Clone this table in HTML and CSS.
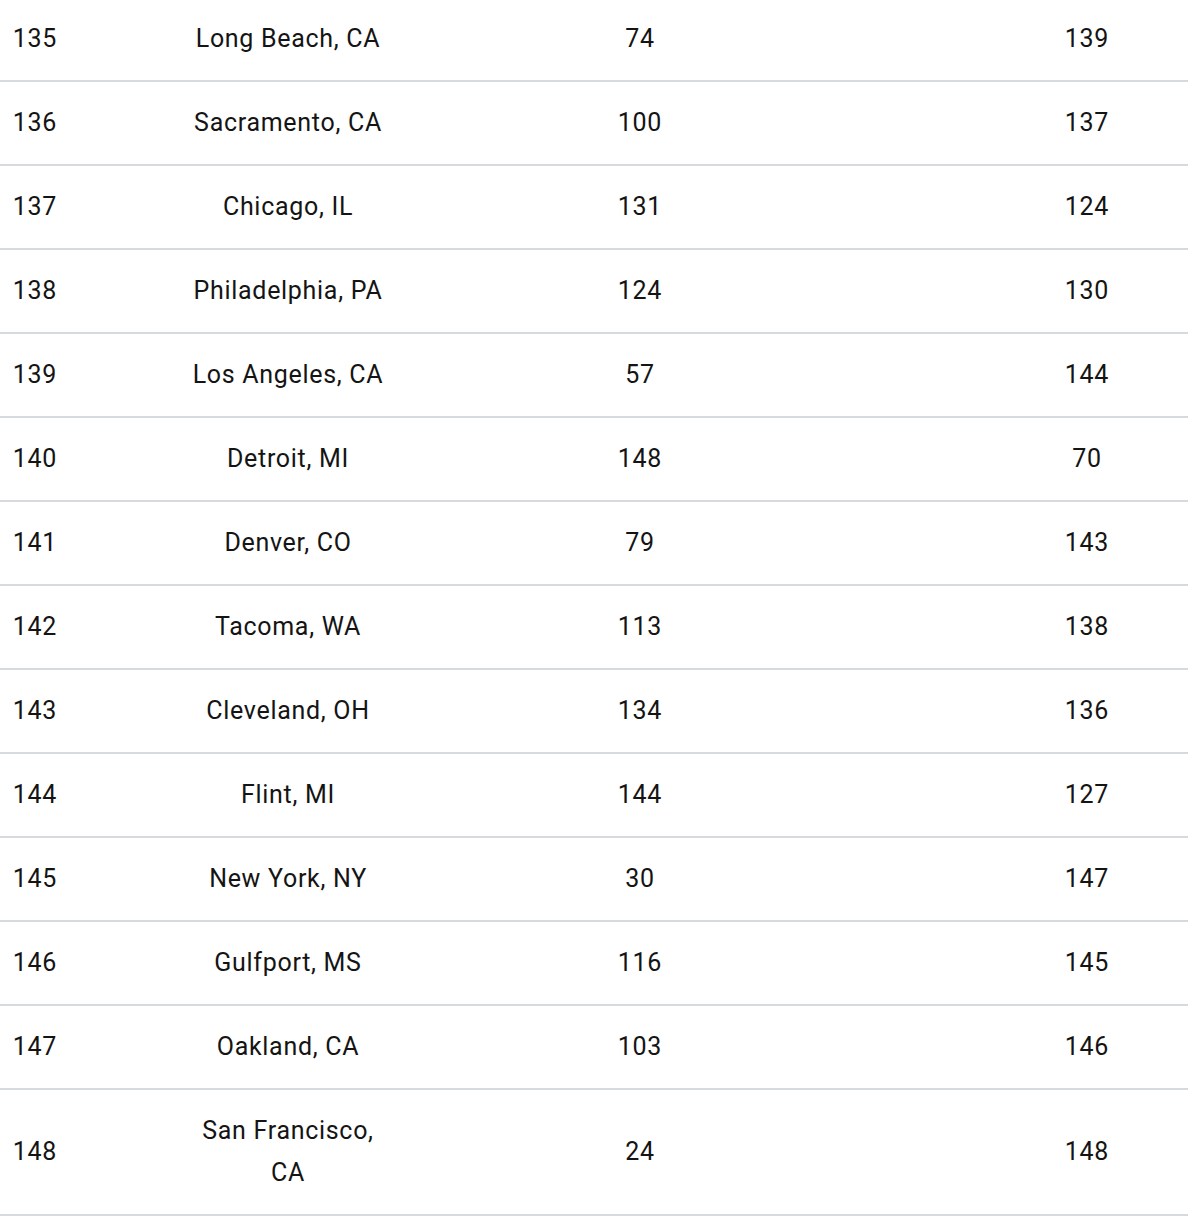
FILE: index.html
```html
<!DOCTYPE html>
<html lang="en">
<head>
<meta charset="utf-8">
<title>Rankings</title>
<link rel="stylesheet" href="styles.css">
</head>
<body>
<div class="table">
  <div class="row"><div class="cell rank">135</div><div class="cell city"><span>Long Beach, CA</span></div><div class="cell num">74</div><div class="cell last">139</div></div>
  <div class="row"><div class="cell rank">136</div><div class="cell city"><span>Sacramento, CA</span></div><div class="cell num">100</div><div class="cell last">137</div></div>
  <div class="row"><div class="cell rank">137</div><div class="cell city"><span>Chicago, IL</span></div><div class="cell num">131</div><div class="cell last">124</div></div>
  <div class="row"><div class="cell rank">138</div><div class="cell city"><span>Philadelphia, PA</span></div><div class="cell num">124</div><div class="cell last">130</div></div>
  <div class="row"><div class="cell rank">139</div><div class="cell city"><span>Los Angeles, CA</span></div><div class="cell num">57</div><div class="cell last">144</div></div>
  <div class="row"><div class="cell rank">140</div><div class="cell city"><span>Detroit, MI</span></div><div class="cell num">148</div><div class="cell last">70</div></div>
  <div class="row"><div class="cell rank">141</div><div class="cell city"><span>Denver, CO</span></div><div class="cell num">79</div><div class="cell last">143</div></div>
  <div class="row"><div class="cell rank">142</div><div class="cell city"><span>Tacoma, WA</span></div><div class="cell num">113</div><div class="cell last">138</div></div>
  <div class="row"><div class="cell rank">143</div><div class="cell city"><span>Cleveland, OH</span></div><div class="cell num">134</div><div class="cell last">136</div></div>
  <div class="row"><div class="cell rank">144</div><div class="cell city"><span>Flint, MI</span></div><div class="cell num">144</div><div class="cell last">127</div></div>
  <div class="row"><div class="cell rank">145</div><div class="cell city"><span>New York, NY</span></div><div class="cell num">30</div><div class="cell last">147</div></div>
  <div class="row"><div class="cell rank">146</div><div class="cell city"><span>Gulfport, MS</span></div><div class="cell num">116</div><div class="cell last">145</div></div>
  <div class="row"><div class="cell rank">147</div><div class="cell city"><span>Oakland, CA</span></div><div class="cell num">103</div><div class="cell last">146</div></div>
  <div class="row"><div class="cell rank">148</div><div class="cell city"><span>San Francisco, CA</span></div><div class="cell num">24</div><div class="cell last">148</div></div>
</div>
</body>
</html>
```
FILE: styles.css
```css
html, body {
  margin: 0;
  padding: 0;
  background: #ffffff;
}
body {
  font-family: "Roboto", "Liberation Sans", sans-serif;
  font-size: 25px;
  letter-spacing: 0.7px;
  color: #141414;
  overflow: hidden;
}
.table {
  margin-top: -2px;
  width: 1188px;
}
.row {
  display: grid;
  grid-template-columns: 70px 436px 268px 1fr;
  align-items: center;
  border-bottom: 2px solid #d6dadd;
}
.cell {
  padding: 20px 0;
  line-height: 42px;
  text-align: center;
}
.city {
  padding-left: 118px;
  padding-right: 118px;
}
.last {
  padding-left: 212px;
}
```
